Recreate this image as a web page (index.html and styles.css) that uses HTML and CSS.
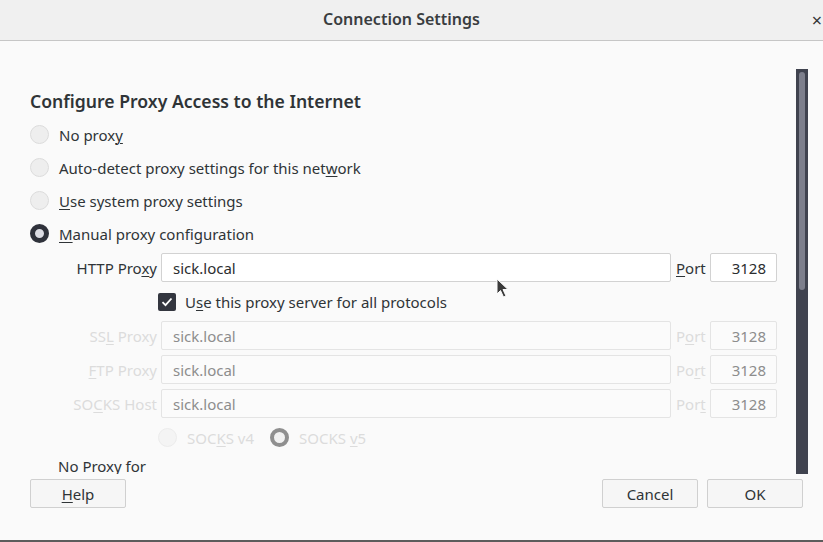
FILE: index.html
```html
<!DOCTYPE html>
<html>
<head>
<meta charset="utf-8">
<link rel="stylesheet" href="styles.css">
</head>
<body>
<div class="window">
  <div class="titlebar">
    <div class="title">Connection Settings</div>
    <div class="close">×</div>
  </div>
  <div class="main">
    <div class="scroll">
      <div class="content">
        <h1 class="heading">Configure Proxy Access to the Internet</h1>
        <div class="radios">
          <div class="radio-row"><span class="radio"></span><span>No prox<u>y</u></span></div>
          <div class="radio-row"><span class="radio"></span><span>Auto-detect proxy settings for this net<u>w</u>ork</span></div>
          <div class="radio-row"><span class="radio"></span><span><u>U</u>se system proxy settings</span></div>
          <div class="radio-row"><span class="radio checked"></span><span><u>M</u>anual proxy configuration</span></div>
        </div>
        <div class="proxy-grid">
          <label class="plabel">HTTP Pro<u>x</u>y</label>
          <div class="field">sick.local</div>
          <label class="port-label"><u>P</u>ort</label>
          <div class="field port">3128</div>

          <div class="check-row"><span class="checkbox"><svg width="12" height="10" viewBox="0 0 12 10"><path d="M1.5 5.2 L4.5 8.2 L10.5 1.5" fill="none" stroke="#fff" stroke-width="1.8"/></svg></span><span>U<u>s</u>e this proxy server for all protocols</span></div>

          <label class="plabel disabled">SS<u>L</u> Proxy</label>
          <div class="field dis">sick.local</div>
          <label class="port-label disabled">P<u>o</u>rt</label>
          <div class="field port dis">3128</div>

          <label class="plabel disabled"><u>F</u>TP Proxy</label>
          <div class="field dis">sick.local</div>
          <label class="port-label disabled">Po<u>r</u>t</label>
          <div class="field port dis">3128</div>

          <label class="plabel disabled">SO<u>C</u>KS Host</label>
          <div class="field dis">sick.local</div>
          <label class="port-label disabled">Por<u>t</u></label>
          <div class="field port dis">3128</div>

          <div class="socks-row">
            <span class="radio dis-radio"></span><span class="disabled">SOC<u>K</u>S v4</span>
            <span class="radio dis-checked"></span><span class="disabled">SOCKS <u>v</u>5</span>
          </div>
        </div>
        <div class="noproxy">No Proxy for</div>
      </div>
      <div class="scrollbar"><div class="thumb"></div></div>
    </div>
    <div class="buttons">
      <button class="btn"><u>H</u>elp</button>
      <div class="right-buttons">
        <button class="btn">Cancel</button>
        <button class="btn">OK</button>
      </div>
    </div>
  </div>
  <svg class="cursor" width="14" height="22" viewBox="0 0 14 22"><path d="M1 1 L1 16 L4.5 12.5 L7.5 19 L10 18 L7 11.5 L12 11.5 Z" fill="#3a3a3a" stroke="#fafafa" stroke-width="1"/></svg>
</div>
</body>
</html>
```

FILE: styles.css
```css
* { box-sizing: border-box; }
html, body { margin: 0; padding: 0; }
body {
  width: 823px;
  height: 542px;
  overflow: hidden;
  font-family: "Noto Sans", "Open Sans", sans-serif;
  font-size: 15px;
  color: #2f3437;
  background: #fafafa;
}
u { text-decoration: underline; text-underline-offset: 2px; text-decoration-thickness: 1px; }
.window {
  position: relative;
  width: 823px;
  height: 542px;
  display: flex;
  flex-direction: column;
  border-bottom: 2px solid #5c5c5c;
}
.titlebar {
  height: 41px;
  flex: none;
  background: #f0f0f0;
  border-bottom: 1px solid #c6c6c6;
  display: flex;
  align-items: center;
  justify-content: center;
  position: relative;
}
.title {
  font-weight: 600;
  font-size: 16px;
  color: #3a3d40;
  margin-top: -3px;
  margin-left: -20px;
}
.close {
  position: absolute;
  right: 1px;
  top: 8px;
  font-size: 18px;
  color: #333;
}
.main {
  flex: 1;
  display: flex;
  flex-direction: column;
  padding: 28px 15px 0 30px;
}
.scroll {
  height: 405px;
  display: flex;
}
.content {
  flex: 1;
  overflow: hidden;
}
.heading {
  margin: 21px 0 6px 0;
  font-size: 17.6px;
  font-weight: 600;
  color: #2f3437;
  line-height: 22px;
}
.radios { display: flex; flex-direction: column; }
.radio-row {
  height: 33px;
  display: flex;
  align-items: center;
  gap: 10px;
}
.radio {
  width: 19px;
  height: 19px;
  border-radius: 50%;
  border: 1px solid #dcdcdc;
  background: #eeeeee;
  flex: none;
}
.radio.checked {
  border: 5px solid #2f323b;
  background: #dcdde4;
}
.proxy-grid {
  display: grid;
  grid-template-columns: 131px 510px 39px 67px;
  grid-auto-rows: 29px;
  row-gap: 5px;
  align-items: center;
  margin-top: 3px;
}
.plabel {
  justify-self: end;
  padding-right: 4px;
  color: #2f3437;
}
.port-label {
  padding-left: 5px;
}
.disabled { color: #dcdcdc; }
.plabel.disabled, .port-label.disabled { color: #dcdcdc; }
.field {
  height: 29px;
  border: 1px solid #d2d2d2;
  border-radius: 2px;
  background: #ffffff;
  padding: 0 11px;
  display: flex;
  align-items: center;
  color: #2b2e30;
}
.field.port { justify-content: flex-end; padding-right: 10px; }
.field.dis { border-color: #e4e4e4; background: #fbfbfb; color: #8d8d8d; }
.check-row {
  grid-column: 2 / 5;
  margin-left: -3px;
  display: flex;
  align-items: center;
  gap: 9px;
}
.checkbox {
  width: 18px;
  height: 18px;
  background: #33363f;
  border-radius: 2px;
  display: flex;
  align-items: center;
  justify-content: center;
}
.socks-row {
  grid-column: 2 / 5;
  margin-left: -3px;
  display: flex;
  align-items: center;
  gap: 10px;
}
.dis-radio { background: #f4f4f4; border-color: #ececec; }
.dis-checked { border: 4px solid #8f8f8f; background: #f1f1f1; margin-left: 6px; }
.noproxy { margin-top: 4px; margin-left: 28px; }
.scrollbar {
  width: 12px;
  height: 405px;
  background: #40434f;
  padding: 3px;
  flex: none;
}
.thumb {
  width: 6px;
  height: 218px;
  border-radius: 3px;
  background: #7d7f8c;
}
.buttons {
  display: flex;
  justify-content: space-between;
  margin-top: 5px;
  padding-right: 5px;
}
.right-buttons { display: flex; gap: 9px; }
.btn {
  width: 96px;
  height: 29px;
  border: 1px solid #d0d0d0;
  border-radius: 2px;
  background: #f6f6f6;
  font-family: inherit;
  font-size: 15px;
  color: #2f3437;
  padding: 0;
}
.cursor {
  position: absolute;
  left: 496px;
  top: 278px;
}
```
